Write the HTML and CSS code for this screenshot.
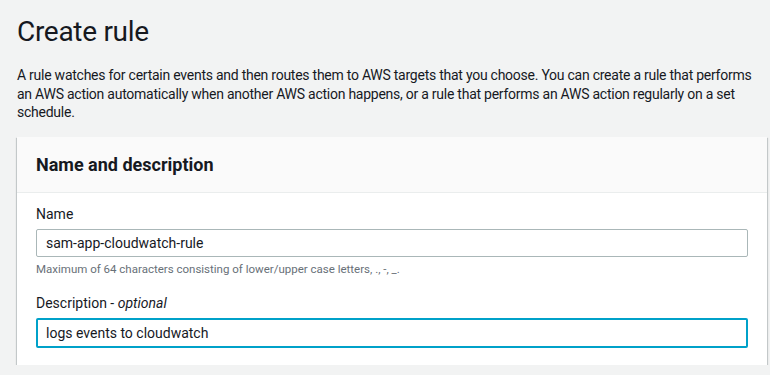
FILE: index.html
```html
<!DOCTYPE html>
<html lang="en">
<head>
    <meta charset="UTF-8">
    <meta name="viewport" content="width=device-width, initial-scale=1.0">
    <title>Create rule</title>
    <link rel="stylesheet" href="styles.css">
</head>
<body>
    <div class="page">
        <h1>Create rule</h1>
        <p class="intro">A rule watches for certain events and then routes them to AWS targets that you choose. You can create a rule that performs an AWS action automatically when another AWS action happens, or a rule that performs an AWS action regularly on a set schedule.</p>

        <div class="card">
            <div class="card-header">
                <h2>Name and description</h2>
            </div>
            <div class="card-body">
                <div class="field">
                    <label for="rule-name">Name</label>
                    <input id="rule-name" class="input" type="text" value="sam-app-cloudwatch-rule">
                    <div class="hint">Maximum of 64 characters consisting of lower/upper case letters, ., -, _.</div>
                </div>
                <div class="field">
                    <label for="rule-desc">Description - <i>optional</i></label>
                    <input id="rule-desc" class="input focused" type="text" value="logs events to cloudwatch">
                </div>
            </div>
        </div>
    </div>
</body>
</html>
```

FILE: styles.css
```css
body {
    font-family: Roboto, 'Noto Sans', sans-serif;
    margin: 0;
    background-color: #f2f3f3;
    color: #16191f;
}
.page {
    padding: 14px 3px 0 17px;
}
h1 {
    font-size: 28px;
    font-weight: 400;
    line-height: 36px;
    letter-spacing: -0.3px;
    margin: 0 0 16px;
}
.intro {
    font-size: 14px;
    line-height: 18.5px;
    letter-spacing: -0.25px;
    margin: 0 0 15px;
}
.card {
    background: white;
    box-shadow: 0 1px 1px 0 rgba(0,28,36,0.3), 1px 1px 1px 0 rgba(0,28,36,0.15), -1px 1px 1px 0 rgba(0,28,36,0.15);
}
.card-header {
    background: #fafafa;
    border-bottom: 1px solid #eaeded;
    padding: 0 19px;
    height: 55px;
    display: flex;
    align-items: center;
}
.card-header h2 {
    font-size: 18px;
    font-weight: 700;
    margin: 0;
}
.card-body {
    padding: 11px 19px 17px;
}
.field {
    display: flex;
    flex-direction: column;
}
.field + .field {
    margin-top: 16px;
}
label {
    font-size: 14px;
    line-height: 20px;
    margin-bottom: 5px;
}
.input {
    font-family: inherit;
    font-size: 14px;
    color: #16191f;
    height: 28px;
    box-sizing: border-box;
    border: 1px solid #aab7b8;
    border-radius: 2px;
    padding: 0 9px;
    outline: none;
}
.input.focused {
    border: 2px solid #00a1c9;
    padding: 0 8px;
    height: 30px;
}
.hint {
    font-size: 11.5px;
    color: #687078;
    line-height: 16px;
    margin-top: 4px;
}
```
